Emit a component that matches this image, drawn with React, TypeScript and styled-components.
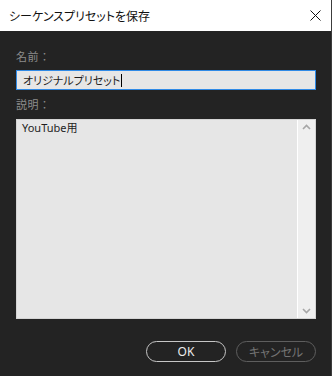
import styled, { createGlobalStyle } from 'styled-components';

const GlobalStyle = createGlobalStyle`
  html, body {
    margin: 0;
    padding: 0;
    background: #232323;
  }
  body {
    font-family: 'Noto Sans', 'Noto Sans CJK JP', sans-serif;
    font-feature-settings: 'palt' 1;
  }
`;

const Window = styled.div`
  width: 332px;
  height: 376px;
  box-sizing: border-box;
  border-right: 1px solid #3c3c3c;
  background: #232323;
  display: flex;
  flex-direction: column;
`;

const TitleBar = styled.div`
  height: 31px;
  flex-shrink: 0;
  background: #ffffff;
  display: flex;
  align-items: center;
  justify-content: space-between;
  padding: 0 10px 0 9px;
`;

const TitleText = styled.span`
  font-size: 12px;
  color: #111;
`;

const CloseButton = styled.div`
  width: 12px;
  height: 12px;
  display: flex;
  align-items: center;
  justify-content: center;
`;

const Body = styled.div`
  display: flex;
  flex-direction: column;
  padding: 19px 15px 0 16px;
`;

const FieldLabel = styled.div<{ $gap: number }>`
  font-size: 11px;
  line-height: 14px;
  height: 14px;
  color: #8c8c8c;
  font-feature-settings: normal;
  letter-spacing: 0.5px;
  margin-bottom: ${({ $gap }) => $gap}px;
`;

const TextInput = styled.div`
  height: 20px;
  box-sizing: border-box;
  border: 1px solid #2f8ae6;
  background: #e6e6e6;
  display: flex;
  align-items: center;
  padding-left: 6px;
  font-size: 11px;
  color: #1e1e1e;
  margin-bottom: 8px;
`;

const Caret = styled.span`
  display: inline-block;
  width: 1px;
  height: 13px;
  background: #000;
  margin-left: 1px;
`;

const TextArea = styled.div`
  height: 200px;
  box-sizing: border-box;
  background: #e6e6e6;
  border: 1px solid #d4d4d4;
  display: flex;
`;

const TextAreaContent = styled.div`
  flex: 1;
  padding: 0 5px;
  font-size: 11px;
  line-height: 16px;
  color: #1e1e1e;
`;

const ScrollBar = styled.div`
  width: 17px;
  border-left: 1px solid #ffffff;
  background: #efefef;
  display: flex;
  flex-direction: column;
  justify-content: space-between;
  align-items: center;
  padding: 4px 0 4px;
`;

const ButtonRow = styled.div`
  display: flex;
  justify-content: flex-end;
  gap: 10px;
  margin-top: 22px;
`;

const PillButton = styled.div<{ $disabled?: boolean }>`
  width: 80px;
  height: 21px;
  box-sizing: border-box;
  border-radius: 11px;
  border: 1.5px solid ${({ $disabled }) => ($disabled ? '#5e5e5e' : '#c6c6c6')};
  color: ${({ $disabled }) => ($disabled ? '#747474' : '#ececec')};
  font-size: 12px;
  display: flex;
  align-items: center;
  justify-content: center;
`;

const Chevron = ({ up }: { up?: boolean }) => (
  <svg width="9" height="6" viewBox="0 0 9 6">
    <path
      d={up ? 'M1 5 L4.5 1.5 L8 5' : 'M1 1 L4.5 4.5 L8 1'}
      fill="none"
      stroke="#a6a6a6"
      strokeWidth="1.6"
    />
  </svg>
);

export default function App() {
  return (
    <>
      <GlobalStyle />
      <Window>
        <TitleBar>
          <TitleText>シーケンスプリセットを保存</TitleText>
          <CloseButton>
            <svg width="11" height="11" viewBox="0 0 11 11">
              <path d="M0.5 0.5 L10.5 10.5 M10.5 0.5 L0.5 10.5" stroke="#111" strokeWidth="1" />
            </svg>
          </CloseButton>
        </TitleBar>
        <Body>
          <FieldLabel $gap={6}>名前：</FieldLabel>
          <TextInput>
            オリジナルプリセット
            <Caret />
          </TextInput>
          <FieldLabel $gap={7}>説明：</FieldLabel>
          <TextArea>
            <TextAreaContent>YouTube用</TextAreaContent>
            <ScrollBar>
              <Chevron up />
              <Chevron />
            </ScrollBar>
          </TextArea>
          <ButtonRow>
            <PillButton>OK</PillButton>
            <PillButton $disabled>キャンセル</PillButton>
          </ButtonRow>
        </Body>
      </Window>
    </>
  );
}
